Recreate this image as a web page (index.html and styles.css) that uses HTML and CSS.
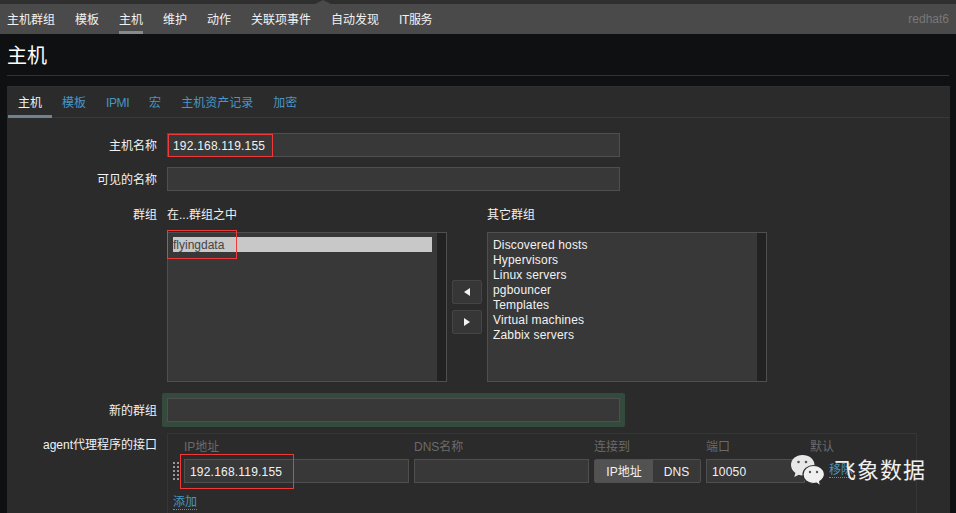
FILE: index.html
```html
<!DOCTYPE html>
<html lang="zh">
<head>
<meta charset="utf-8">
<title>主机</title>
<link rel="stylesheet" href="styles.css">
</head>
<body>
<div class="page">
  <div class="topstrip"><span class="notch"></span></div>
  <nav class="nav">
    <a>主机群组</a><a>模板</a><a class="on">主机</a><a>维护</a><a>动作</a><a>关联项事件</a><a>自动发现</a><a class="tight">IT服务</a>
    <span class="server">redhat6</span>
  </nav>
  <header class="head"><h1>主机</h1></header>
  <main class="panel">
    <div class="tabs">
      <a class="on">主机</a><a>模板</a><a class="tight">IPMI</a><a>宏</a><a>主机资产记录</a><a>加密</a>
    </div>
    <div class="form">
      <div class="row">
        <label>主机名称</label>
        <div class="input wide val">192.168.119.155</div>
      </div>
      <div class="row">
        <label>可见的名称</label>
        <div class="input wide"></div>
      </div>
      <div class="row groups">
        <label>群组</label>
        <div class="tween">
          <div class="col">
            <div class="cap">在...群组之中</div>
            <div class="list">
              <div class="items"><div class="sel">flyingdata</div></div>
              <div class="scroll"></div>
            </div>
          </div>
          <div class="arrows">
            <button class="arrow"><svg width="6" height="8" viewBox="0 0 6 8"><path d="M6 0V8L0 4Z" fill="#f2f2f2"/></svg></button>
            <button class="arrow"><svg width="6" height="8" viewBox="0 0 6 8"><path d="M0 0V8L6 4Z" fill="#f2f2f2"/></svg></button>
          </div>
          <div class="col">
            <div class="cap">其它群组</div>
            <div class="list">
              <div class="items latin">
                <div>Discovered hosts</div><div>Hypervisors</div><div>Linux servers</div><div>pgbouncer</div><div>Templates</div><div>Virtual machines</div><div>Zabbix servers</div>
              </div>
              <div class="scroll"></div>
            </div>
          </div>
        </div>
      </div>
      <div class="row newgroup">
        <label>新的群组</label>
        <div class="glow"><div class="input wide"></div></div>
      </div>
      <div class="row iface">
        <label>agent代理程序的接口</label>
        <div class="ifbox">
          <div class="ifgrid">
            <span></span><span class="th">IP地址</span><span class="th">DNS名称</span><span class="th">连接到</span><span class="th">端口</span><span class="th">默认</span>
            <svg class="grip" width="6" height="18" viewBox="0 0 6 18"><defs><pattern id="g" width="4" height="4" patternUnits="userSpaceOnUse"><rect width="2" height="2" fill="#9a9a9a"/></pattern></defs><rect width="6" height="18" fill="url(#g)"/></svg>
            <div class="input val">192.168.119.155</div>
            <div class="input"></div>
            <div class="seg"><span class="on">IP地址</span><span>DNS</span></div>
            <div class="input val">10050</div>
            <a class="link rm">移除</a>
          </div>
          <a class="link add">添加</a>
        </div>
      </div>
    </div>
  </main>
  <div class="mark m1"></div>
  <div class="mark m2"></div>
  <div class="mark m3"></div>
  <div class="wm">
    <svg width="36" height="34" viewBox="0 0 36 34">
      <path d="M12.500 1C6 1 1 5.300 1 11c0 3.300 1.700 6 4.400 8L4.300 23l4.400-2.200c1.300.4 2.500.6 3.800.6C19 21.400 24.500 17 24.500 11S19 1 12.500 1Z" fill="#e8e8e8"/>
      <path d="M23.500 11.500c-5.800 0-10.500 4-10.500 9s4.700 9 10.500 9c1 0 2-.1 3-.4l4 2.900-.8-4.400c2.800-1.700 4.800-4.400 4.800-7.500 0-5-4.800-8.600-11-8.600Z" fill="#f0f0f0" stroke="#2b2b2b" stroke-width="1.200"/>
      <circle cx="8.500" cy="8" r="1.300" fill="#555"/><circle cx="16" cy="8" r="1.300" fill="#555"/>
      <circle cx="20" cy="18" r="1.200" fill="#555"/><circle cx="27" cy="18" r="1.200" fill="#555"/>
    </svg>
    <span>飞象数据</span>
  </div>
</div>
</body>
</html>
```
FILE: styles.css
```css
* { box-sizing: border-box; }
html, body { margin: 0; padding: 0; }
body {
  background: #0e1012;
  color: #f2f2f2;
  font: 12px/14px "Liberation Sans", "Noto Sans CJK SC", sans-serif;
}
.page { position: relative; width: 956px; height: 513px; overflow: hidden; }

.topstrip { position: relative; height: 4px; background: #2f2f2f; }
.notch {
  position: absolute; left: 315px; top: 0;
  border-left: 8px solid transparent; border-right: 8px solid transparent;
  border-bottom: 4px solid #4a4a4a;
}
.nav {
  display: flex; gap: 20px; height: 30px; padding: 0 7px;
  background: #4a4a4a; align-items: flex-start;
}
.nav a { height: 30px; padding-top: 9px; color: #f2f2f2; }
.nav a.on { border-bottom: 3px solid #8a8a8a; }
.tight { letter-spacing: -0.4px; }
.server { margin-left: auto; padding-top: 8px; color: #787878; }

.head { margin: 0 7px; height: 42px; border-bottom: 1px solid #333; }
.head h1 { margin: 0; padding-top: 12px; font-size: 20px; line-height: 20px; font-weight: 400; color: #fff; }

.panel {
  width: 943px; height: 440px; margin: 10px 0 0 7px;
  background: #2b2b2b; border-top: 1px solid #303030;
}
.tabs { display: flex; height: 31px; padding-left: 1px; border-bottom: 1px solid #383838; }
.tabs a { padding: 9px 10px 0; height: 31px; color: #4796c4; }
.tabs a.on { color: #f2f2f2; border-bottom: 3px solid #6e8290; }

.form { display: flex; flex-direction: column; padding-top: 15px; }
.row { display: flex; gap: 10px; }
.row + .row { margin-top: 10px; }
.row label { flex: none; width: 150px; text-align: right; padding-top: 6px; }

.input {
  height: 24px; background: #383838; border: 1px solid #4f4f4f;
  padding: 5px 5px 3px; line-height: 14px; color: #f2f2f2;
}
.val { letter-spacing: 0.2px; }
.wide { width: 453px; }

.groups { margin-top: 16px !important; }
.groups label { padding-top: 1px; }
.tween { display: flex; }
.col { display: flex; flex-direction: column; width: 280px; }
.cap { height: 19px; padding-top: 1px; }
.list { display: flex; height: 150px; margin-top: 6px; background: #383838; border: 1px solid #4f4f4f; }
.items { flex: 1; padding: 4px 5px 0; }
.items div { height: 15px; line-height: 16px; }
.latin { letter-spacing: 0.17px; }
.items .sel { background: #c8c8c8; color: #444; }
.scroll { width: 9px; background: #222; }
.arrows { width: 40px; display: flex; flex-direction: column; align-items: center; gap: 6px; padding-top: 73px; }
.arrow {
  display: flex; align-items: center; justify-content: center;
  width: 30px; height: 24px; padding: 0;
  background: #363636; border: 1px solid #454545; border-radius: 2px;
}

.newgroup { margin-top: 11px !important; align-items: center; gap: 5px; }
.newgroup label { padding-top: 1px; }
.glow { padding: 5px; background: #334a3c; border-radius: 2px; }

.iface { margin-top: 6px !important; }
.iface label { padding-top: 5px; }
.ifbox { width: 750px; height: 90px; border: 1px solid #363636; padding: 5px 5px 0; }
.ifgrid {
  display: grid; grid-template-columns: 6px 225px 175px 107px 99px auto;
  column-gap: 5px; align-items: center;
}
.th { color: #6a6a6a; height: 20px; padding-top: 1px; }
.grip { justify-self: start; }
.seg { display: flex; height: 24px; border: 1px solid #4f4f4f; border-radius: 2px; background: #383838; }
.seg span { padding-top: 5px; text-align: center; }
.seg span:first-child { width: 58px; }
.seg span:last-child { flex: 1; }
.seg .on { background: #525252; }
.link { color: #4796c4; border-bottom: 1px dotted #4796c4; }
.rm { justify-self: start; margin-left: 19px; line-height: 13px; }
.add { display: inline-block; margin-top: 12px; line-height: 14px; }

.mark { position: absolute; border: 1px solid #f03a3a; }
.m1 { left: 168px; top: 134px; width: 105px; height: 23px; }
.m2 { left: 167px; top: 230px; width: 70px; height: 29px; }
.m3 { left: 180px; top: 454px; width: 114px; height: 35px; }

.wm { position: absolute; left: 790px; top: 454px; display: flex; align-items: center; gap: 8px; }
.wm span { font-size: 22px; line-height: 34px; color: #f0f0f0; letter-spacing: 1px; }
```
